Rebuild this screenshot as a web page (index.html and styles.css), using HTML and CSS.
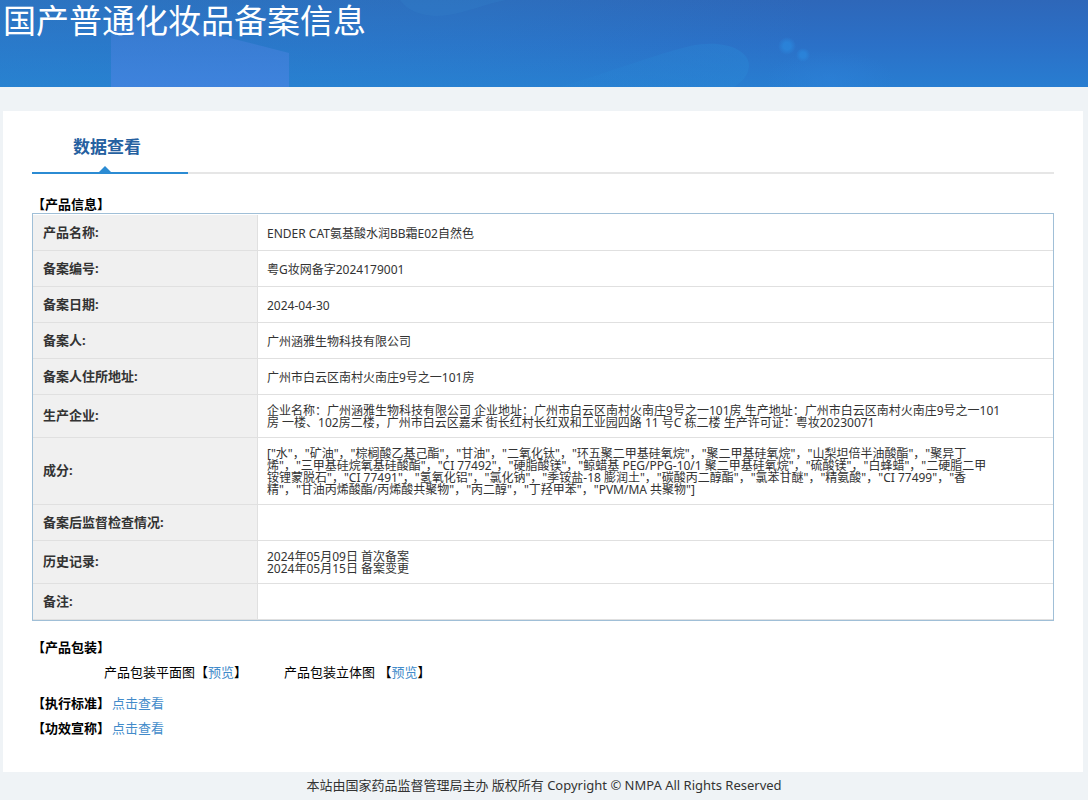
FILE: index.html
```html
<!DOCTYPE html>
<html lang="zh-CN">
<head>
<meta charset="utf-8">
<meta name="viewport" content="width=device-width, initial-scale=1">
<title>国产普通化妆品备案信息</title>
<link rel="stylesheet" href="styles.css">
</head>
<body>
<header class="banner">
  <svg class="banner-art" viewBox="0 0 1088 87" preserveAspectRatio="none" aria-hidden="true">
    <defs>
      <linearGradient id="block" x1="0" y1="0" x2="0" y2="1">
        <stop offset="0" stop-color="#4779d0" stop-opacity="0"/>
        <stop offset="0.4" stop-color="#417fd8" stop-opacity="0.65"/>
        <stop offset="1" stop-color="#4183de" stop-opacity="0.9"/>
      </linearGradient>
      <linearGradient id="wave" x1="0" y1="0" x2="1" y2="0">
        <stop offset="0" stop-color="#2a88d6" stop-opacity="0.15"/>
        <stop offset="1" stop-color="#2a88d6" stop-opacity="0.4"/>
      </linearGradient>
      <radialGradient id="dot">
        <stop offset="0.4" stop-color="#2a86dc" stop-opacity="0.8"/>
        <stop offset="1" stop-color="#2a86dc" stop-opacity="0"/>
      </radialGradient>
      <radialGradient id="glow">
        <stop offset="0" stop-color="#2e84dc" stop-opacity="0.4"/>
        <stop offset="1" stop-color="#2e84dc" stop-opacity="0"/>
      </radialGradient>
    </defs>
    <path d="M111 8 L190 20 L230 38 L289 53 V87 H111 Z" fill="url(#block)"/>
    <path d="M400 0 C410 14 430 18 448 15 C468 12 485 4 506 0 Z" fill="#3484cc" fill-opacity="0.25"/>
    <path d="M560 87 C610 72 650 56 690 46 C725 39 748 50 749 65 C749 75 742 82 734 87 Z" fill="url(#wave)"/>
    <ellipse cx="830" cy="80" rx="65" ry="30" fill="url(#glow)"/>
    <circle cx="787" cy="46" r="9" fill="url(#dot)"/>
    <circle cx="803" cy="55" r="7" fill="url(#dot)"/>
  </svg>
  <h1 class="banner-title">国产普通化妆品备案信息</h1>
</header>

<main class="panel">
  <nav class="tabs"><a class="tab" href="#data">数据查看</a></nav>

  <section id="data">
    <h2 class="section-title table-title">【产品信息】</h2>
    <table class="info">
      <tbody>
        <tr><th scope="row">产品名称:</th><td>ENDER CAT氨基酸水润BB霜E02自然色</td></tr>
        <tr><th scope="row">备案编号:</th><td>粤G妆网备字2024179001</td></tr>
        <tr><th scope="row">备案日期:</th><td>2024-04-30</td></tr>
        <tr><th scope="row">备案人:</th><td>广州涵雅生物科技有限公司</td></tr>
        <tr><th scope="row">备案人住所地址:</th><td>广州市白云区南村火南庄9号之一101房</td></tr>
        <tr><th scope="row">生产企业:</th><td>企业名称：广州涵雅生物科技有限公司 企业地址：广州市白云区南村火南庄9号之一101房 生产地址：广州市白云区南村火南庄9号之一101<br>房 一楼、102房二楼，广州市白云区嘉禾 街长红村长红双和工业园四路 11 号C 栋二楼 生产许可证：粤妆20230071</td></tr>
        <tr><th scope="row">成分:</th><td>["水"，"矿油"，"棕榈酸乙基己酯"，"甘油"，"二氧化钛"，"环五聚二甲基硅氧烷"，"聚二甲基硅氧烷"，"山梨坦倍半油酸酯"，"聚异丁<br>烯"，"三甲基硅烷氧基硅酸酯"，"CI 77492"，"硬脂酸镁"，"鲸蜡基 PEG/PPG-10/1 聚二甲基硅氧烷"，"硫酸镁"，"白蜂蜡"，"二硬脂二甲<br>铵锂蒙脱石"，"CI 77491"，"氢氧化铝"，"氯化钠"，"季铵盐-18 膨润土"，"碳酸丙二醇酯"，"氯苯甘醚"，"精氨酸"，"CI 77499"，"香<br>精"，"甘油丙烯酸酯/丙烯酸共聚物"，"丙二醇"，"丁羟甲苯"，"PVM/MA 共聚物"]</td></tr>
        <tr><th scope="row">备案后监督检查情况:</th><td></td></tr>
        <tr><th scope="row">历史记录:</th><td>2024年05月09日 首次备案<br>2024年05月15日 备案变更</td></tr>
        <tr><th scope="row">备注:</th><td></td></tr>
      </tbody>
    </table>
  </section>

  <section class="extras">
    <h2 class="section-title">【产品包装】</h2>
    <div class="packs">
      <span>产品包装平面图【<a href="#flat">预览</a>】</span>
      <span>产品包装立体图 【<a href="#solid">预览</a>】</span>
    </div>
    <div class="line"><h2 class="section-title">【执行标准】</h2><a href="#standard">点击查看</a></div>
    <div class="line"><h2 class="section-title">【功效宣称】</h2><a href="#claims">点击查看</a></div>
  </section>
</main>

<footer class="footer">本站由国家药品监督管理局主办 版权所有 Copyright © NMPA All Rights Reserved</footer>
</body>
</html>
```
FILE: styles.css
```css
* {
  box-sizing: border-box;
}

body {
  margin: 0;
  background: #eff3f6;
  color: #000;
  font-family: "Noto Sans", "Noto Sans CJK SC", sans-serif;
  font-size: 13px;
  line-height: 25px;
  text-spacing-trim: space-all;
}

h1,
h2 {
  margin: 0;
}

a {
  color: #428bca;
  text-decoration: none;
}

.banner {
  position: relative;
  height: 87px;
  background:
    linear-gradient(90deg, rgba(40, 140, 208, 0.35), rgba(40, 140, 208, 0.2) 45%, rgba(40, 140, 208, 0) 75%),
    linear-gradient(180deg, #2e67b9, #2b70c7 50%, #287dd1);
}

.banner-art {
  position: absolute;
  inset: 0;
  width: 100%;
  height: 100%;
}

.banner-title {
  position: relative;
  padding-left: 3px;
  color: #fff;
  font-family: "Noto Sans CJK SC", sans-serif;
  font-size: 33px;
  font-weight: 400;
  line-height: 38px;
}

.panel {
  margin: 24px 5px 0 3px;
  padding: 24px 29px 31px;
  background: #fff;
}

.tabs {
  display: flex;
  margin-bottom: 19px;
  border-bottom: 2px solid #e6e6e6;
}

.tab {
  position: relative;
  width: 156px;
  height: 39px;
  margin-bottom: -2px;
  padding-right: 6px;
  border-bottom: 2px solid #2b8bd3;
  color: #2560a0;
  font-size: 17px;
  font-weight: 700;
  line-height: 24px;
  text-align: center;
}

.tab::after {
  content: "";
  position: absolute;
  bottom: 0;
  left: 67px;
  border: 6px solid transparent;
  border-top-width: 0;
  border-bottom-color: #2b8bd3;
}

.section-title {
  font-size: 13px;
  font-weight: 700;
}

.table-title {
  padding-top: 2px;
  line-height: 18px;
}

.info {
  width: 100%;
  padding-top: 1px;
  border: 1px solid #a0bfd7;
  border-collapse: separate;
  border-spacing: 0;
  color: #333;
  font-size: 12px;
  line-height: 12px;
}

.info th,
.info td {
  height: 36px;
  padding: 10px 9px 8px;
  border-bottom: 1px solid #e0e0e0;
  text-align: left;
}

.info th {
  width: 225px;
  padding: 8px 10px 10px;
  border-right: 1px solid #e0e0e0;
  background: #f0f0f0;
  font-size: 13px;
}

.info td {
  white-space: nowrap;
}

.extras {
  padding-top: 14px;
}

.packs {
  display: flex;
  gap: 37px;
  margin-bottom: 6px;
  padding-left: 72px;
}

.line {
  display: flex;
  gap: 2px;
}

.footer {
  padding: 1px 8px 2px;
  color: #333;
  text-align: center;
}
```
